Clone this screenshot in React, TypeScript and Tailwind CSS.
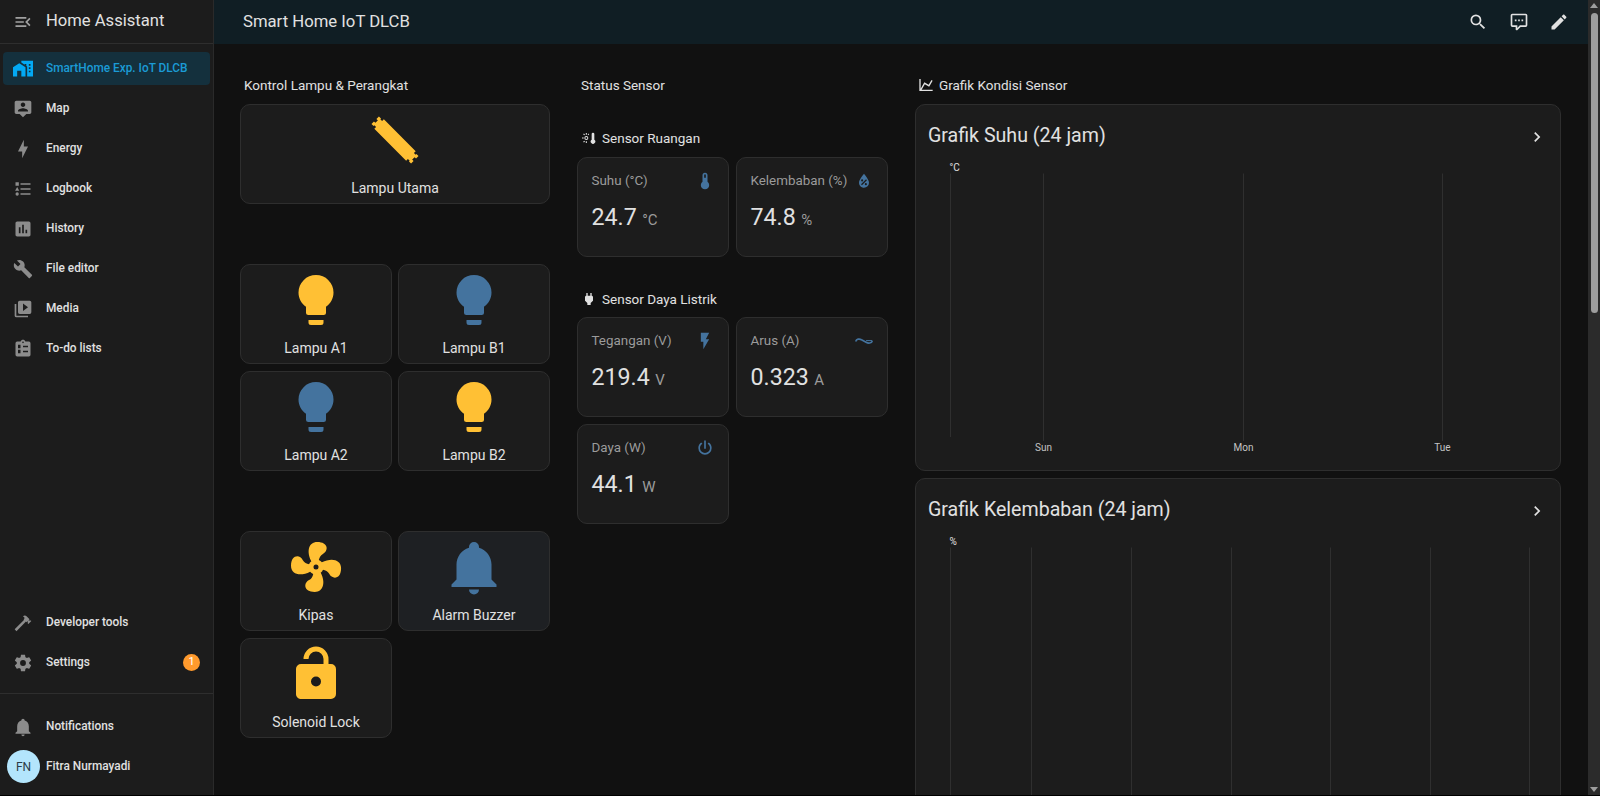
import type { ReactNode } from 'react';

const AMBER = '#ffc034';
const BLUE = '#44739e';

const icons = {
  menuOpen: 'M21,15.61L19.59,17L14.58,12L19.59,7L21,8.39L17.44,12L21,15.61M3,6H16V8H3V6M3,13V11H13V13H3M3,18V16H16V18H3Z',
  homeCity: 'M0,21V10L7.5,5L15,10V21H10V14H5V21H0M24,2V21H17V8.93L16,8.27V6H14V6.93L10,4.27V2H24M21,14H19V16H21V14M21,10H19V12H21V10M21,6H19V8H21V6Z',
  map: 'M20 2H4C2.9 2 2 2.9 2 4V16C2 17.1 2.9 18 4 18H8L12 22L16 18H20C21.1 18 22 17.1 22 16V4C22 2.9 21.1 2 20 2M12 4.3C13.5 4.3 14.7 5.5 14.7 7C14.7 8.5 13.5 9.7 12 9.7C10.5 9.7 9.3 8.5 9.3 7C9.3 5.5 10.5 4.3 12 4.3M18 15H6V14.1C6 12.1 10 11 12 11C14 11 18 12.1 18 14.1V15Z',
  bolt: 'M11 15H6L13 1V9H18L11 23V15Z',
  logbook: 'M5,9.5L7.5,14H2.5L5,9.5M3,4H7V8H3V4M5,20A2,2 0 0,0 7,18A2,2 0 0,0 5,16A2,2 0 0,0 3,18A2,2 0 0,0 5,20M9,5V7H21V5H9M9,19H21V17H9V19M9,13H21V11H9V13Z',
  chartBox: 'M9 17H7V10H9V17M13 17H11V7H13V17M17 17H15V13H17V17M19 3H5C3.9 3 3 3.9 3 5V19C3 20.1 3.9 21 5 21H19C20.1 21 21 20.1 21 19V5C21 3.9 20.1 3 19 3Z',
  wrench: 'M22.7,19L13.6,9.9C14.5,7.6 14,4.9 12.1,3C10.1,1 7.1,0.6 4.7,1.7L9,6L6,9L1.6,4.7C0.4,7.1 0.9,10.1 2.9,12.1C4.8,14 7.5,14.5 9.8,13.6L18.9,22.7C19.3,23.1 19.9,23.1 20.3,22.7L22.6,20.4C23.1,20 23.1,19.3 22.7,19Z',
  media: 'M4,6H2V20A2,2 0 0,0 4,22H18V20H4V6M20,2H8A2,2 0 0,0 6,4V16A2,2 0 0,0 8,18H20A2,2 0 0,0 22,16V4A2,2 0 0,0 20,2M12,14.5V5.5L18,10L12,14.5Z',
  todo: 'M19,3H14.82C14.4,1.84 13.3,1 12,1C10.7,1 9.6,1.84 9.18,3H5A2,2 0 0,0 3,5V19A2,2 0 0,0 5,21H19A2,2 0 0,0 21,19V5A2,2 0 0,0 19,3M12,3A1,1 0 0,1 13,4A1,1 0 0,1 12,5A1,1 0 0,1 11,4A1,1 0 0,1 12,3M12,8V10H18V8H12M12,14V16H18V14H12M6,7V11H9V7H6M6,13V17H9V13H6Z',
  hammer: 'M2 19.63L13.43 8.2L12.72 7.5L14.14 6.07L12 3.89C13.2 2.7 15.09 2.7 16.27 3.89L19.87 7.5L18.45 8.91H21.29L22 9.62L18.45 13.21L17.74 12.5V9.62L16.27 11.04L15.56 10.33L4.13 21.76L2 19.63Z',
  cog: 'M12,15.5A3.5,3.5 0 0,1 8.5,12A3.5,3.5 0 0,1 12,8.5A3.5,3.5 0 0,1 15.5,12A3.5,3.5 0 0,1 12,15.5M19.43,12.97C19.47,12.65 19.5,12.33 19.5,12C19.5,11.67 19.47,11.34 19.43,11L21.54,9.37C21.73,9.22 21.78,8.95 21.66,8.73L19.66,5.27C19.54,5.05 19.27,4.96 19.05,5.05L16.56,6.05C16.04,5.66 15.5,5.32 14.87,5.07L14.5,2.42C14.46,2.18 14.25,2 14,2H10C9.75,2 9.54,2.18 9.5,2.42L9.13,5.07C8.5,5.32 7.96,5.66 7.44,6.05L4.95,5.05C4.73,4.96 4.46,5.05 4.34,5.27L2.34,8.73C2.21,8.95 2.27,9.22 2.46,9.37L4.57,11C4.53,11.34 4.5,11.67 4.5,12C4.5,12.33 4.53,12.65 4.57,12.97L2.46,14.63C2.27,14.78 2.21,15.05 2.34,15.27L4.34,18.73C4.46,18.95 4.73,19.03 4.95,18.95L7.44,17.94C7.96,18.34 8.5,18.68 9.13,18.93L9.5,21.58C9.54,21.82 9.75,22 10,22H14C14.25,22 14.46,21.82 14.5,21.58L14.87,18.93C15.5,18.67 16.04,18.34 16.56,17.94L19.05,18.95C19.27,19.03 19.54,18.95 19.66,18.73L21.66,15.27C21.78,15.05 21.73,14.78 21.54,14.63L19.43,12.97Z',
  bell: 'M21,19V20H3V19L5,17V11C5,7.9 7.03,5.17 10,4.29C10,4.19 10,4.1 10,4A2,2 0 0,1 12,2A2,2 0 0,1 14,4C14,4.1 14,4.19 14,4.29C16.97,5.17 19,7.9 19,11V17L21,19M14,21A2,2 0 0,1 12,23A2,2 0 0,1 10,21',
  magnify: 'M9.5,3A6.5,6.5 0 0,1 16,9.5C16,11.11 15.41,12.59 14.44,13.73L14.71,14H15.5L20.5,19L19,20.5L14,15.5V14.71L13.73,14.44C12.59,15.41 11.11,16 9.5,16A6.5,6.5 0 0,1 3,9.5A6.5,6.5 0 0,1 9.5,3M9.5,5C7,5 5,7 5,9.5C5,12 7,14 9.5,14C12,14 14,12 14,9.5C14,7 12,5 9.5,5Z',
  comment: 'M9,22A1,1 0 0,1 8,21V18H4A2,2 0 0,1 2,16V4C2,2.89 2.9,2 4,2H20A2,2 0 0,1 22,4V16A2,2 0 0,1 20,18H13.9L10.2,21.71C10,21.9 9.75,22 9.5,22V22H9M10,16V19.08L13.08,16H20V4H4V16H10M17,11H15V9H17V11M13,11H11V9H13V11M9,11H7V9H9V11Z',
  pencil: 'M20.71,7.04C21.1,6.65 21.1,6 20.71,5.63L18.37,3.29C18,2.9 17.35,2.9 16.96,3.29L15.12,5.12L18.87,8.87M3,17.25V21H6.75L17.81,9.93L14.06,6.18L3,17.25Z',
  chevron: 'M8.59,16.58L13.17,12L8.59,7.41L10,6L16,12L10,18L8.59,16.58Z',
  bulb: 'M12,2A7,7 0 0,0 5,9C5,11.38 6.19,13.47 8,14.74V17A1,1 0 0,0 9,18H15A1,1 0 0,0 16,17V14.74C17.81,13.47 19,11.38 19,9A7,7 0 0,0 12,2M9,21A1,1 0 0,0 10,22H14A1,1 0 0,0 15,21V20H9V21Z',
  fan: 'M12,11A1,1 0 0,0 11,12A1,1 0 0,0 12,13A1,1 0 0,0 13,12A1,1 0 0,0 12,11M12.5,2C17,2 17.11,5.57 14.75,6.75C13.76,7.24 13.32,8.29 13.13,9.22C13.61,9.42 14.03,9.73 14.35,10.13C18.05,8.13 22.03,8.92 22.03,12.5C22.03,17 18.46,17.1 17.28,14.73C16.78,13.74 15.72,13.3 14.79,13.11C14.59,13.59 14.28,14 13.88,14.34C15.87,18.03 15.08,22 11.5,22C7,22 6.91,18.42 9.27,17.24C10.25,16.75 10.69,15.71 10.89,14.79C10.4,14.59 9.97,14.27 9.65,13.87C5.96,15.85 2,15.07 2,11.5C2,7 5.56,6.89 6.74,9.26C7.24,10.25 8.29,10.68 9.22,10.87C9.41,10.39 9.73,9.97 10.14,9.65C8.15,5.96 8.94,2 12.5,2Z',
  lockOpen: 'M18,8A2,2 0 0,1 20,10V20A2,2 0 0,1 18,22H6C4.89,22 4,21.1 4,20V10A2,2 0 0,1 6,8H15V6A3,3 0 0,0 12,3A3,3 0 0,0 9,6H7A5,5 0 0,1 12,1A5,5 0 0,1 17,6V8H18M12,17A2,2 0 0,0 14,15A2,2 0 0,0 12,13A2,2 0 0,0 10,15A2,2 0 0,0 12,17Z',
  tube: 'M3,9.3H21V10.3H22V9.9H23.2V11.3H22.4V12.7H23.2V14.1H22V13.7H21V14.7H3V13.7H2V14.1H0.8V12.7H1.6V11.3H0.8V9.9H2V10.3H3Z',
  thermometer: 'M15 13V5A3 3 0 0 0 9 5V13A5 5 0 1 0 15 13M12 4A1 1 0 0 1 13 5V8H11V5A1 1 0 0 1 12 4Z',
  waterPercent: 'M12,3.25C12,3.25 6,10 6,14C6,17.32 8.69,20 12,20A6,6 0 0,0 18,14C18,10 12,3.25 12,3.25M14.47,9.97L15.53,11.03L9.53,17.03L8.47,15.97M9.75,10A1.25,1.25 0 0,1 11,11.25A1.25,1.25 0 0,1 9.75,12.5A1.25,1.25 0 0,1 8.5,11.25A1.25,1.25 0 0,1 9.75,10M14.25,14.5A1.25,1.25 0 0,1 15.5,15.75A1.25,1.25 0 0,1 14.25,17A1.25,1.25 0 0,1 13,15.75A1.25,1.25 0 0,1 14.25,14.5Z',
  flash: 'M7,2V13H10V22L17,10H13L17,2H7Z',
  power: 'M16.56,5.44L15.11,6.89C16.84,7.94 18,9.83 18,12A6,6 0 0,1 12,18A6,6 0 0,1 6,12C6,9.83 7.16,7.94 8.88,6.88L7.44,5.44C5.36,6.88 4,9.28 4,12A8,8 0 0,0 12,20A8,8 0 0,0 20,12C20,9.28 18.64,6.88 16.56,5.44M13,3H11V13H13',
  plug: 'M16,7V3H14V7H10V3H8V7C7,7 6,8 6,9V14.5L9.5,18V21H14.5V18L18,14.5V9C18,8 17,7 16,7Z',
  chartLine: 'M16,11.78L20.24,4.45L21.97,5.45L16.74,14.5L10.23,10.75L5.46,19H22V21H2V3H4V17.54L9.5,8L16,11.78Z',
  sunThermo: 'M8,9A3,3 0 0,0 8,15A3,3 0 0,0 8,9M8,10.5A1.5,1.5 0 0,1 8,13.5A1.5,1.5 0 0,1 8,10.5M7.2,4.5H8.8V7H7.2ZM7.2,17H8.8V19.5H7.2ZM1.5,11.2H4V12.8H1.5ZM3.2,6.2L4.4,5.2L6,6.8L4.9,7.9ZM3.2,17.8L4.9,16.1L6,17.2L4.4,18.8ZM11.2,5.4L12.3,6.4L11,7.9L10,6.8ZM16,6A2,2 0 0,1 20,6V14.5A3.4,3.4 0 1,1 16,14.5Z',
};

function Icon({ d, size, color, className }: { d: string; size: number; color: string; className?: string }) {
  return (
    <svg viewBox="0 0 24 24" width={size} height={size} fill={color} fillRule="evenodd" className={className}>
      <path d={d} />
    </svg>
  );
}

// the long tube lamp is the only one drawn on a slant
function TubeIcon({ color }: { color: string }) {
  return (
    <svg viewBox="0 0 24 24" width={60} height={60} fill={color}>
      <path d={icons.tube} transform="rotate(45 12 12)" />
    </svg>
  );
}

function CurrentAcIcon({ color }: { color: string }) {
  return (
    <svg viewBox="0 0 24 24" width={20} height={20} fill="none" stroke={color} strokeWidth="2">
      <path d="M2 12.5C3 9.5 6.5 9 9 10.5L14.5 13.5C17 15 21 15 22 12" />
      <path d="M14.5 11.5H22" strokeWidth="1.2" />
    </svg>
  );
}

const navItems = [
  { label: 'Map', icon: icons.map },
  { label: 'Energy', icon: icons.bolt },
  { label: 'Logbook', icon: icons.logbook },
  { label: 'History', icon: icons.chartBox },
  { label: 'File editor', icon: icons.wrench },
  { label: 'Media', icon: icons.media },
  { label: 'To-do lists', icon: icons.todo },
];

function NavRow({ icon, label, children }: { icon: string; label: string; children?: ReactNode }) {
  return (
    <div className="mx-[3px] flex h-[33px] items-center px-[10px]">
      <Icon d={icon} size={20} color="#8c8c8c" />
      <span className="ml-[13px] flex-1 text-[11.85px] font-medium text-[#e1e1e1]">{label}</span>
      {children}
    </div>
  );
}

function Sidebar() {
  return (
    <aside className="flex h-[795px] w-[214px] shrink-0 flex-col border-r border-[#2a2a2a] bg-[#1c1c1c]">
      <div className="flex h-[44px] shrink-0 items-center border-b border-[#2e2e2e] pl-[13px]">
        <Icon d={icons.menuOpen} size={20} color="#a0a0a0" />
        <span className="ml-[13px] text-[16.6px] text-[#e1e1e1]">Home Assistant</span>
      </div>
      <div className="mt-[8px] flex flex-col gap-[7px]">
        <div className="mx-[3px] flex h-[33px] items-center rounded-[4px] bg-[#14303d] pl-[10px]">
          <Icon d={icons.homeCity} size={20} color="#03a9f4" />
          <span className="ml-[13px] text-[11.85px] font-medium text-[#1b9bd6]">SmartHome Exp. IoT DLCB</span>
        </div>
        {navItems.map((item) => (
          <NavRow key={item.label} icon={item.icon} label={item.label} />
        ))}
      </div>
      <div className="mt-auto flex flex-col gap-[7px] pb-[14px]">
        <NavRow icon={icons.hammer} label="Developer tools" />
        <NavRow icon={icons.cog} label="Settings">
          <span className="flex h-[17px] w-[17px] items-center justify-center rounded-full bg-[#ff9a2d] text-[11px] text-[#fff]">1</span>
        </NavRow>
      </div>
      <div className="flex flex-col gap-[7px] border-t border-[#2e2e2e] pb-[12px] pt-[16px]">
        <NavRow icon={icons.bell} label="Notifications" />
        <div className="flex h-[33px] items-center pl-[7px]">
          <div className="flex h-[33px] w-[33px] items-center justify-center rounded-full bg-[#b3e5fc] text-[12px] text-[#2b3c48]">FN</div>
          <span className="ml-[6px] text-[11.85px] font-medium text-[#e1e1e1]">Fitra Nurmayadi</span>
        </div>
      </div>
    </aside>
  );
}

function Tile({ label, icon, tinted }: { label: string; icon: ReactNode; tinted?: boolean }) {
  return (
    <div className={`flex h-[100px] flex-col items-center rounded-[10px] border border-[#2e2e2e] pt-[5px] ${tinted ? 'bg-[#1e2023]' : 'bg-[#1c1c1c]'}`}>
      {icon}
      <span className="mt-[7.5px] text-[14px] leading-[20px] text-[#e1e1e1]">{label}</span>
    </div>
  );
}

function DeviceIcon({ d, on }: { d: string; on?: boolean }) {
  return <Icon d={d} size={60} color={on ? AMBER : BLUE} />;
}

function SectionTitle({ icon, children }: { icon?: string; children: ReactNode }) {
  return (
    <div className="flex h-[20px] items-center pl-[4px] text-[13.5px] text-[#e1e1e1]">
      {icon && <Icon d={icon} size={16} color="#e1e1e1" className="mr-[5px]" />}
      {children}
    </div>
  );
}

function SensorCard({ label, value, unit, icon }: { label: string; value: string; unit: string; icon: ReactNode }) {
  return (
    <div className="h-[100px] rounded-[10px] border border-[#2e2e2e] bg-[#1c1c1c] pl-[13.5px] pr-[13px] pt-[13px]">
      <div className="flex h-[20px] items-center justify-between">
        <span className="text-[13.4px] font-normal text-[#9b9b9b]">{label}</span>
        {icon}
      </div>
      <div className="mt-[10px] flex items-baseline">
        <span className="text-[23.2px] leading-[32px] text-[#e1e1e1]">{value}</span>
        <span className="ml-[5.5px] text-[15px] text-[#9b9b9b]">{unit}</span>
      </div>
    </div>
  );
}

function SensorIcon({ d }: { d: string }) {
  return <Icon d={d} size={20} color={BLUE} />;
}

function ChartCard({ title, unit, lines, labels, height }: {
  title: string;
  unit: string;
  lines: number[];
  labels?: string[];
  height: number;
}) {
  return (
    <div className="rounded-[10px] border border-[#2e2e2e] bg-[#1c1c1c]" style={{ height }}>
      <div className="flex h-[56px] items-start justify-between pl-[12px] pr-[13px] pt-[16.5px]">
        <span className="text-[19.6px] leading-[28px] text-[#e1e1e1]">{title}</span>
        <Icon d={icons.chevron} size={20} color="#e1e1e1" className="mt-[5px]" />
      </div>
      <svg width="644" height={height - 58} className="block">
        <text x="33.5" y="9.5" fontSize="10" fill="#e1e1e1" fontFamily="Roboto">{unit}</text>
        {lines.map((x, i) => (
          <line key={x} x1={x} x2={x} y1="12.5" y2={labels ? (i === 0 ? 276 : 280) : 400} stroke="#2f2f2f" />
        ))}
        {labels?.map((label, i) => (
          <text key={label} x={lines[i + 1]} y="289.5" fontSize="10" fill="#c4c4c4" textAnchor="middle" fontFamily="Roboto">{label}</text>
        ))}
      </svg>
    </div>
  );
}

export default function App() {
  return (
    <div className="h-[796px] w-[1600px] overflow-hidden bg-[#000000] font-['Roboto',sans-serif]">
      <div className="flex h-[795px]">
        <Sidebar />
        <div className="flex min-w-0 flex-1 flex-col bg-[#111111]">
          <header className="flex h-[44px] shrink-0 items-center bg-[#101e24] pl-[29px] pr-[19px]">
            <span className="flex-1 text-[16.7px] text-[#e1e1e1]">Smart Home IoT DLCB</span>
            <div className="flex items-center gap-[20.5px]">
              <Icon d={icons.magnify} size={20} color="#e1e1e1" />
              <Icon d={icons.comment} size={20} color="#e1e1e1" />
              <Icon d={icons.pencil} size={20} color="#e1e1e1" />
            </div>
          </header>
          <main className="flex flex-1 gap-[27px] overflow-hidden pl-[26px] pr-[27px] pt-[31px]">
            <section className="w-[310px] shrink-0">
              <SectionTitle>Kontrol Lampu &amp; Perangkat</SectionTitle>
              <div className="mt-[9px]">
                <Tile label="Lampu Utama" icon={<TubeIcon color={AMBER} />} />
              </div>
              <div className="mt-[60px] grid grid-cols-2 gap-x-[6px] gap-y-[7px]">
                <Tile label="Lampu A1" icon={<DeviceIcon d={icons.bulb} on />} />
                <Tile label="Lampu B1" icon={<DeviceIcon d={icons.bulb} />} />
                <Tile label="Lampu A2" icon={<DeviceIcon d={icons.bulb} />} />
                <Tile label="Lampu B2" icon={<DeviceIcon d={icons.bulb} on />} />
              </div>
              <div className="mt-[60px] grid grid-cols-2 gap-x-[6px] gap-y-[7px]">
                <Tile label="Kipas" icon={<DeviceIcon d={icons.fan} on />} />
                <Tile label="Alarm Buzzer" icon={<DeviceIcon d={icons.bell} />} tinted />
                <Tile label="Solenoid Lock" icon={<DeviceIcon d={icons.lockOpen} on />} />
              </div>
            </section>
            <section className="w-[311px] shrink-0">
              <SectionTitle>Status Sensor</SectionTitle>
              <div className="mt-[33px]">
                <SectionTitle icon={icons.sunThermo}>Sensor Ruangan</SectionTitle>
              </div>
              <div className="mt-[9px] grid grid-cols-2 gap-x-[7px] gap-y-[7px]">
                <SensorCard label="Suhu (°C)" value="24.7" unit="°C" icon={<SensorIcon d={icons.thermometer} />} />
                <SensorCard label="Kelembaban (%)" value="74.8" unit="%" icon={<SensorIcon d={icons.waterPercent} />} />
              </div>
              <div className="mt-[32px]">
                <SectionTitle icon={icons.plug}>Sensor Daya Listrik</SectionTitle>
              </div>
              <div className="mt-[8px] grid grid-cols-2 gap-x-[7px] gap-y-[7px]">
                <SensorCard label="Tegangan (V)" value="219.4" unit="V" icon={<SensorIcon d={icons.flash} />} />
                <SensorCard label="Arus (A)" value="0.323" unit="A" icon={<CurrentAcIcon color={BLUE} />} />
                <SensorCard label="Daya (W)" value="44.1" unit="W" icon={<SensorIcon d={icons.power} />} />
              </div>
            </section>
            <section className="min-w-0 flex-1">
              <div className="-ml-[1px]">
                <SectionTitle icon={icons.chartLine}>Grafik Kondisi Sensor</SectionTitle>
              </div>
              <div className="mt-[9px] flex flex-col gap-[7px]">
                <ChartCard title="Grafik Suhu (24 jam)" unit="°C" lines={[34.5, 127.5, 327.5, 526.5]} labels={['Sun', 'Mon', 'Tue']} height={367} />
                <ChartCard title="Grafik Kelembaban (24 jam)" unit="%" lines={[34.5, 115.5, 215.5, 315.5, 414.5, 514.5, 613.5]} height={400} />
              </div>
            </section>
          </main>
        </div>
        <div className="flex w-[12px] shrink-0 flex-col items-center bg-[#2b2b2b]">
          <div className="mt-[3px] h-0 w-0 border-x-[4px] border-b-[5px] border-x-transparent border-b-[#9e9e9e]" />
          <div className="mt-[5px] h-[300px] w-[7px] rounded-[4px] bg-[#9e9e9e]" />
          <div className="mb-[3px] mt-auto h-0 w-0 border-x-[4px] border-t-[5px] border-x-transparent border-t-[#9e9e9e]" />
        </div>
      </div>
    </div>
  );
}
